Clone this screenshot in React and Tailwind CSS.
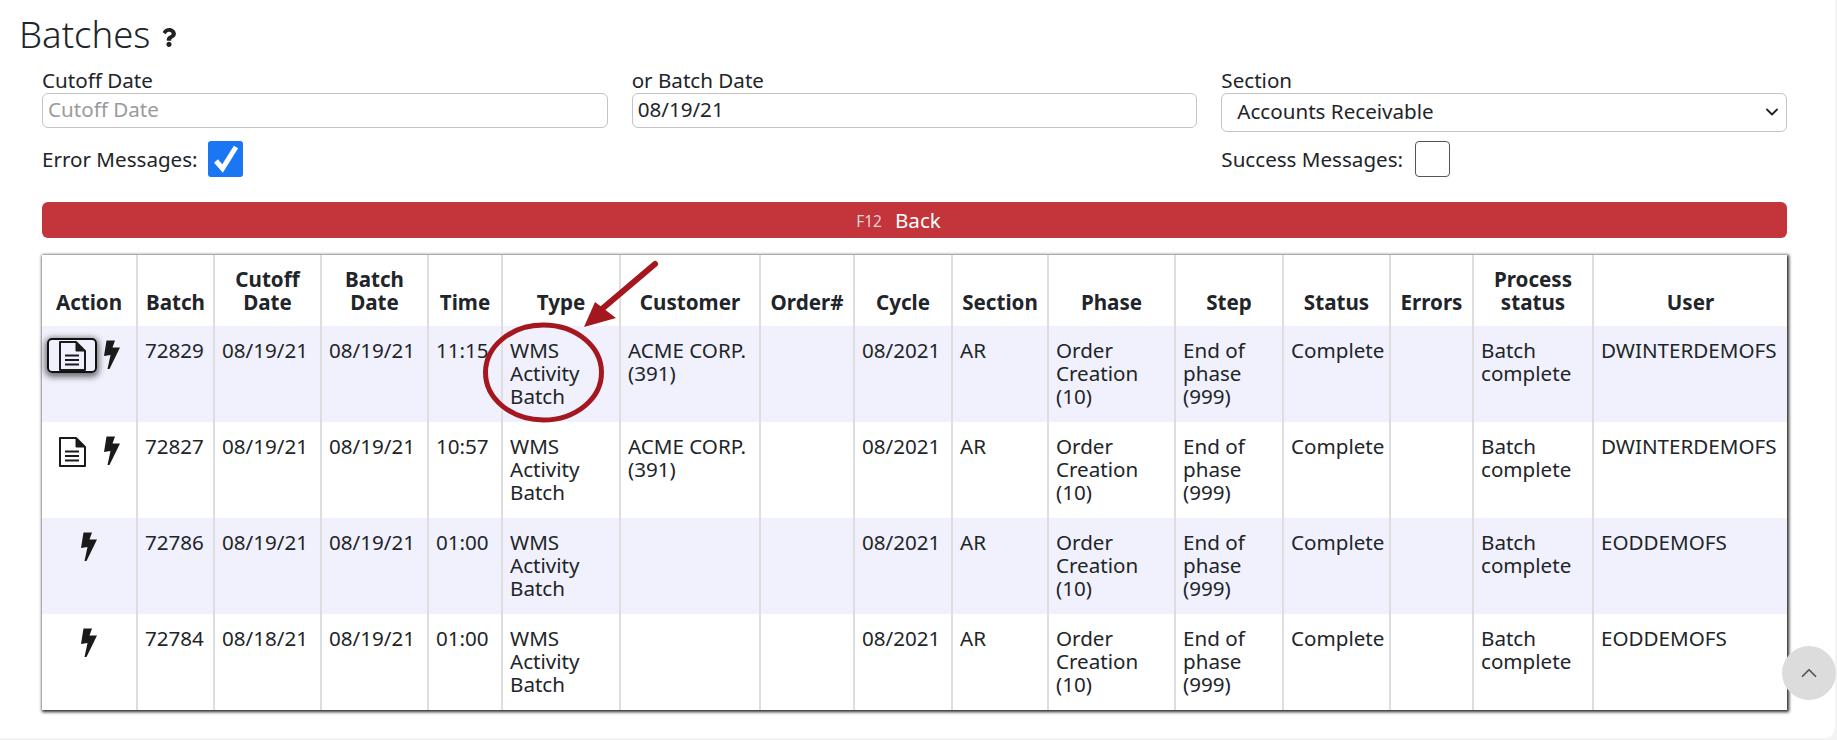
import React from "react";
import { FaQuestion } from "react-icons/fa";
import { ChevronDown, ChevronUp } from "lucide-react";

const COLS = [
  { title: ["Action"], w: 95 },
  { title: ["Batch"], w: 77 },
  { title: ["Cutoff", "Date"], w: 107 },
  { title: ["Batch", "Date"], w: 107 },
  { title: ["Time"], w: 74 },
  { title: ["Type"], w: 118 },
  { title: ["Customer"], w: 140 },
  { title: ["Order#"], w: 94 },
  { title: ["Cycle"], w: 98 },
  { title: ["Section"], w: 96 },
  { title: ["Phase"], w: 127 },
  { title: ["Step"], w: 108 },
  { title: ["Status"], w: 107 },
  { title: ["Errors"], w: 83 },
  { title: ["Process", "status"], w: 120 },
  { title: ["User"], w: 194 },
];

const ROWS = [
  { doc: true, focus: true, batch: "72829", cutoff: "08/19/21", time: "11:15", customer: ["ACME CORP.", "(391)"], user: "DWINTERDEMOFS" },
  { doc: true, batch: "72827", cutoff: "08/19/21", time: "10:57", customer: ["ACME CORP.", "(391)"], user: "DWINTERDEMOFS" },
  { batch: "72786", cutoff: "08/19/21", time: "01:00", customer: [], user: "EODDEMOFS" },
  { batch: "72784", cutoff: "08/18/21", time: "01:00", customer: [], user: "EODDEMOFS" },
];

function Lines({ items }) {
  return items.map((t) => <div key={t}>{t}</div>);
}

function Cell({ children }) {
  return <td className="border-r-2 border-[#dedede] last:border-r-0 pl-[7px] pr-1 pt-[13px] pb-[13px] align-top whitespace-nowrap">{children}</td>;
}

function DocIcon() {
  return (
    <svg width="27" height="30" viewBox="0 0 27 30" fill="none" stroke="#1a1a1a" strokeWidth="2">
      <path d="M1 1 H17 L26 10 V29 H1 Z" strokeLinejoin="round" />
      <path d="M17 1 V10 H26" fill="#1a1a1a" strokeWidth="1" />
      <path d="M6 14.5 H20 M6 19 H20 M6 23.5 H20" />
    </svg>
  );
}

function BoltIcon() {
  return (
    <svg width="16" height="29" viewBox="0 0 16 29" fill="#1a1a1a">
      <path d="M2.5 0.5 H11 L8.5 7.5 H16 L5.5 29 L3.5 29 L6.5 15 L0 16 Z" />
    </svg>
  );
}

function ActionCell({ row }) {
  return (
    <td className="border-r-2 border-[#dedede] pt-[12px] align-top">
      <div className={row.doc ? "flex items-start gap-[7px] pl-[5px]" : "flex items-start justify-center"}>
        {row.doc && (
          <span
            className={
              row.focus
                ? "flex h-[35px] w-[50px] items-center justify-center rounded-[5px] border-2 border-[#111] shadow-[0_2px_6px_2px_rgba(0,0,0,0.55)]"
                : "flex h-[35px] w-[50px] items-center justify-center"
            }
          >
            <DocIcon />
          </span>
        )}
        <span className="pt-[2px]">
          <BoltIcon />
        </span>
      </div>
    </td>
  );
}

export default function App() {
  return (
    <div className="relative h-[740px] overflow-hidden bg-[#f3f3f3] font-['Noto_Sans','Open_Sans',sans-serif] text-[20.6px] leading-[23px] text-[#212529]">
      <div className="h-[738px] w-[1835px] rounded-br-[10px] bg-white pt-[14px]">
        <h1 className="flex items-center gap-[11px] pl-[19px] text-[36.5px] leading-[40px] font-light">
          Batches
          <FaQuestion className="mt-[7px] h-[19px] w-[16px] text-[#222]" />
        </h1>

        <div className="mt-[14px] ml-[42px] grid w-[1745px] grid-cols-3 gap-x-6">
          <div>
            <label className="block h-[25px] leading-[24px]">Cutoff Date</label>
            <input
              placeholder="Cutoff Date"
              className="block h-[35px] w-full rounded-[6px] border border-[#c4c4c4] bg-white px-[5px] pb-[3px] text-[20.6px] placeholder:text-[#9b9b9b]"
            />
          </div>
          <div>
            <label className="block h-[25px] leading-[24px]">or Batch Date</label>
            <input
              defaultValue="08/19/21"
              className="block h-[35px] w-full rounded-[6px] border border-[#c4c4c4] bg-white px-[5px] pb-[3px] text-[20.6px]"
            />
          </div>
          <div>
            <label className="block h-[25px] leading-[24px]">Section</label>
            <div className="relative">
              <select className="block h-[39px] w-full appearance-none rounded-[6px] border border-[#c4c4c4] bg-white px-[15px] pb-[2px] text-[20.6px]">
                <option>Accounts Receivable</option>
              </select>
              <ChevronDown className="pointer-events-none absolute top-[9px] right-[5px] h-[20px] w-[20px] text-[#222]" strokeWidth={2.2} />
            </div>
          </div>
          <div className="col-start-1 row-start-2 mt-[9px] flex items-center gap-[10px]">
            <span>Error Messages:</span>
            <span className="h-[36px] w-[35px] rounded-[3px] bg-[#1a76f2]">
              <svg width="35" height="36" viewBox="0 0 35 36" fill="none" stroke="#fff" strokeWidth="5">
                <path d="M8 20 L14.5 27.5 L28 6" />
              </svg>
            </span>
          </div>
          <div className="col-start-3 row-start-2 mt-[9px] flex items-center gap-[12px]">
            <span>Success Messages:</span>
            <span className="h-[36px] w-[35px] rounded-[4px] border border-[#555] bg-white" />
          </div>
        </div>

        <button className="mt-[25px] ml-[42px] flex h-[36px] w-[1745px] items-center justify-center gap-[13px] rounded-[6px] bg-[#c4343b] pr-[32px] text-white">
          <span className="mt-[3px] text-[15.5px] text-[#e4d5d6]">F12</span>
          <span className="text-[20.6px]">Back</span>
        </button>

        <div className="mt-[17px] ml-[42px] w-[1745px] shadow-[1px_1px_3px_1px_rgba(0,0,0,0.85)]">
          <table className="w-full table-fixed border-collapse bg-white">
            <colgroup>
              {COLS.map((c) => (
                <col key={c.title.join()} style={{ width: c.w }} />
              ))}
            </colgroup>
            <thead>
              <tr className="h-[71px]">
                {COLS.map((c) => (
                  <th key={c.title.join()} className="border-r-2 border-[#dedede] align-bottom pb-[12px] text-center font-bold whitespace-nowrap last:border-r-0">
                    <Lines items={c.title} />
                  </th>
                ))}
              </tr>
            </thead>
            <tbody>
              {ROWS.map((row, i) => (
                <tr key={row.batch} className={i % 2 === 0 ? "h-[96px] bg-[#f0f1fc]" : "h-[96px] bg-white"}>
                  <ActionCell row={row} />
                  <Cell>{row.batch}</Cell>
                  <Cell>{row.cutoff}</Cell>
                  <Cell>08/19/21</Cell>
                  <Cell>{row.time}</Cell>
                  <Cell>
                    <Lines items={["WMS", "Activity", "Batch"]} />
                  </Cell>
                  <Cell>
                    <Lines items={row.customer} />
                  </Cell>
                  <Cell />
                  <Cell>08/2021</Cell>
                  <Cell>AR</Cell>
                  <Cell>
                    <Lines items={["Order", "Creation", "(10)"]} />
                  </Cell>
                  <Cell>
                    <Lines items={["End of", "phase", "(999)"]} />
                  </Cell>
                  <Cell>Complete</Cell>
                  <Cell />
                  <Cell>
                    <Lines items={["Batch", "complete"]} />
                  </Cell>
                  <Cell>{row.user}</Cell>
                </tr>
              ))}
            </tbody>
          </table>
        </div>
      </div>

      <svg className="pointer-events-none absolute top-0 left-0" width="1837" height="740" fill="none">
        <ellipse cx="543.5" cy="372.5" rx="58" ry="47.5" stroke="#a5171f" strokeWidth="5" />
        <path d="M655 264 L596 314" stroke="#a5171f" strokeWidth="6" strokeLinecap="round" />
        <path d="M584 327 L595 302 L616 318 Z" fill="#a5171f" />
      </svg>

      <button className="absolute top-[646px] left-[1782px] flex h-[54px] w-[54px] items-center justify-center rounded-full bg-[#dcdcdc]">
        <ChevronUp className="h-[26px] w-[26px] text-[#4a5560]" strokeWidth={1.6} />
      </button>
    </div>
  );
}
